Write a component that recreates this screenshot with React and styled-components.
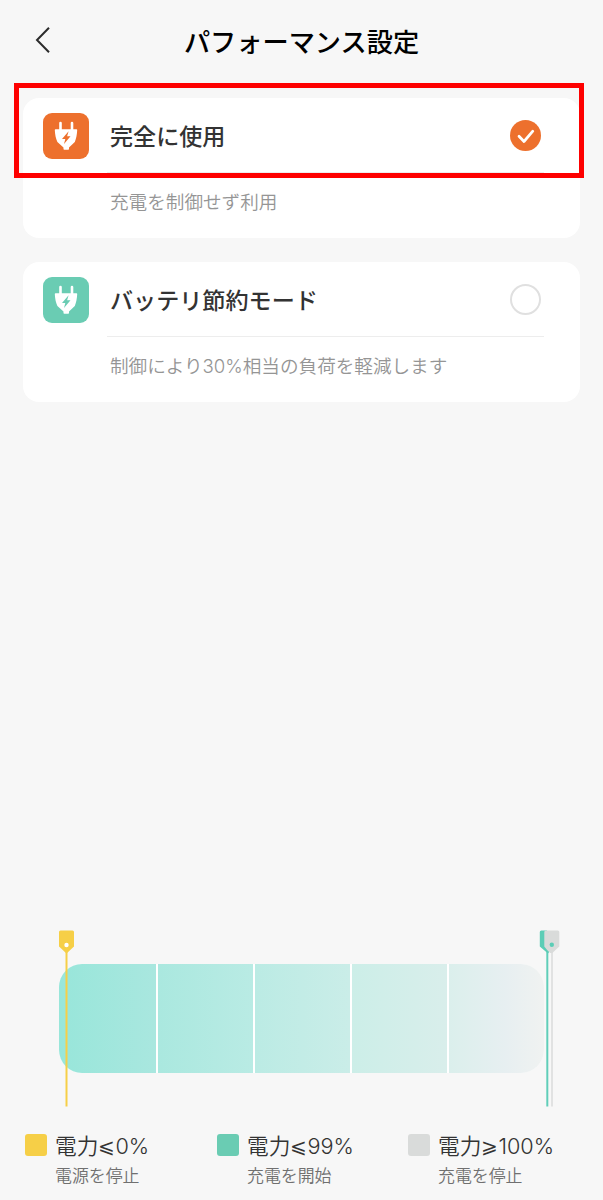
import React from 'react'
import styled, { createGlobalStyle } from 'styled-components'

const ORANGE = '#ed702d'
const GREEN = '#6accb3'
const YELLOW = '#f6cf47'
const GREY = '#d9dbda'

const MODES = [
  {
    title: '完全に使用',
    text: '充電を制御せず利用',
    color: ORANGE,
    selected: true,
  },
  {
    title: 'バッテリ節約モード',
    text: '制御により30%相当の負荷を軽減します',
    color: GREEN,
    selected: false,
  },
]

const LEGEND = [
  { color: YELLOW, sign: '⩽', value: '0%', text: '電源を停止' },
  { color: GREEN, sign: '⩽', value: '99%', text: '充電を開始' },
  { color: GREY, sign: '⩾', value: '100%', text: '充電を停止' },
]

const SEGMENTS = [
  ['#98e6da', '#a9e7df'],
  ['#aae8df', '#b9ebe4'],
  ['#bbebe4', '#caede8'],
  ['#cceee8', '#d9eeeb'],
  ['#dbefec', '#e7eff1 60%, #f0f2f1'],
]

function PlugIcon({ color }) {
  return (
    <svg width="46" height="46" viewBox="0 0 46 46">
      <path d="M17.500 10v8M29 10v8" stroke="#fff" strokeWidth="2.600" strokeLinecap="round" />
      <path
        d="M12.500 16.200H33.500Q34.200 16.200 34.200 17C34 21.500 33.200 25.500 31.800 29L26 34.500V36Q26 36.800 25.200 36.800H21.300Q20.500 36.800 20.500 36V34.500L14.400 29C12.800 25.500 12 21.500 11.800 17Q11.800 16.200 12.500 16.200Z"
        fill="#fff"
      />
      <path d="M25.600 18.300L19 26H22.300L21 30.900L27.500 23.200H24.100Z" fill={color} />
    </svg>
  )
}

export default class App extends React.Component {
  render() {
    return (
      <PageWrapper>
        <GlobalStyles />
        <Header>
          <BackButton aria-label="戻る">
            <svg width="18" height="28" viewBox="0 0 18 28">
              <path
                d="M15 1.700L3 14l12 12.300"
                fill="none"
                stroke="#2c2c2c"
                strokeWidth="2"
              />
            </svg>
          </BackButton>
          <h1>パフォーマンス設定</h1>
        </Header>

        <CardList>
          {MODES.map((mode) => (
            <Card key={mode.title}>
              <CardTop>
                <IconTile color={mode.color}>
                  <PlugIcon color={mode.color} />
                </IconTile>
                <CardTitle>{mode.title}</CardTitle>
                <Radio $selected={mode.selected}>
                  {mode.selected && (
                    <svg width="31" height="31" viewBox="0 0 31 31">
                      <path
                        d="M9 16.200l5 5.300 8.800-10.300"
                        fill="none"
                        stroke="#fff"
                        strokeWidth="2.700"
                        strokeLinecap="round"
                        strokeLinejoin="round"
                      />
                    </svg>
                  )}
                </Radio>
              </CardTop>
              <CardText>{mode.text}</CardText>
              {mode.selected && <Highlight />}
            </Card>
          ))}
        </CardList>

        <Chart>
          <Battery>
            {SEGMENTS.map(([from, to]) => (
              <Segment key={from} $from={from} $to={to} />
            ))}
          </Battery>
          <StartMarker>
            <svg width="16" height="177" viewBox="0 0 16 177">
              <path d="M8.500 20v156.500" stroke={YELLOW} strokeWidth="2" />
              <path d="M1 2q0-1.500 1.500-1.500h12q1.500 0 1.500 1.500v14.500L8.500 23.500 1 16.500z" fill={YELLOW} />
              <circle cx="8.500" cy="15" r="2.200" fill="#fff" />
            </svg>
          </StartMarker>
          <EndMarker>
            <svg width="22" height="177" viewBox="0 0 22 177">
              <path d="M13 20v156.500" stroke="#e1e2e2" strokeWidth="2" />
              <path d="M8.300 20v156.500" stroke="#60ceb9" strokeWidth="2" />
              <path d="M.8 2q0-1.500 1.500-1.500H8v18l2.500 3-1.500 2L.8 16.500z" fill="#5ccdb6" />
              <path d="M5.300 2q0-1.500 1.500-1.500h12q1.500 0 1.500 1.500v14.500l-7 6.500h-2.200q-3-2.700-5.800-6.500z" fill={GREY} />
              <circle cx="12.800" cy="14.800" r="2.200" fill="#5ccdb6" />
            </svg>
          </EndMarker>
        </Chart>

        <Legend>
          {LEGEND.map((item) => (
            <LegendItem key={item.value}>
              <Swatch color={item.color} />
              <div>
                <LegendTitle>
                  電力<Sign>{item.sign}</Sign>
                  {item.value}
                </LegendTitle>
                <LegendText>{item.text}</LegendText>
              </div>
            </LegendItem>
          ))}
        </Legend>
      </PageWrapper>
    )
  }
}

const GlobalStyles = createGlobalStyle`
  * {
    box-sizing: border-box;
  }

  body {
    margin: 0;
    background: #f7f7f7;
    font-family: Inter, 'Noto Sans CJK JP', sans-serif;
  }

  svg {
    display: block;
  }
`

const PageWrapper = styled.div`
  display: flex;
  flex-direction: column;
  height: 1200px;
  overflow: hidden;
`

// Header
//
const Header = styled.header`
  display: grid;
  grid-template-columns: 60px 1fr 60px;
  align-items: center;
  height: 98px;
  padding-bottom: 16px;

  h1 {
    margin: 0;
    padding-top: 3px;
    text-align: center;
    font-size: 26.2px;
    font-weight: 500;
    line-height: 40px;
    white-space: nowrap;
    color: #000;
  }
`

const BackButton = styled.button`
  padding: 0 0 2px 34px;
  border: none;
  background: transparent;
`

// Cards
//
const CardList = styled.main`
  display: flex;
  flex-direction: column;
  gap: 24px;
  padding: 0 23px;
`

const Card = styled.section`
  position: relative;
  height: 140px;
  padding: 0 36px 0 20px;
  border-radius: 16px;
  background: #fff;
`

const CardTop = styled.div`
  display: flex;
  align-items: center;
  height: 75px;
`

const IconTile = styled.div`
  width: 46px;
  height: 46px;
  border-radius: 9px;
  background: ${({ color }) => color};
`

const CardTitle = styled.h2`
  flex: 1;
  margin: 0 0 0 21px;
  padding-top: 2px;
  font-size: 23.1px;
  font-weight: 500;
  line-height: 34px;
  color: #333;
`

const Radio = styled.div`
  width: 31px;
  height: 31px;
  margin-right: 3px;
  border-radius: 50%;
  ${({ $selected }) =>
    $selected ? `background: ${ORANGE};` : 'border: 2px solid #e0e0e0;'}
`

const CardText = styled.p`
  margin: -1px 0 0 64px;
  padding: 15px 0 0 3px;
  border-top: 1px solid #ededed;
  font-size: 18.6px;
  font-weight: 350;
  line-height: 28px;
  color: #959595;
`

const Highlight = styled.div`
  position: absolute;
  top: -15px;
  left: -9px;
  width: 570px;
  height: 95px;
  border: 5px solid #fe0000;
`

// Battery chart
//
const Chart = styled.div`
  position: relative;
  width: 486px;
  margin: auto 0 0 58px;
`

const Battery = styled.div`
  display: grid;
  grid-template-columns: 96.500px repeat(4, 1fr);
  gap: 2px;
  height: 109px;
  margin-left: 1px;
  border-radius: 23px;
  overflow: hidden;
  background: #fff;
`

const Segment = styled.div`
  background: linear-gradient(
    to right,
    ${({ $from }) => $from},
    ${({ $to }) => $to}
  );
`

const StartMarker = styled.div`
  position: absolute;
  top: -34px;
  left: 0;
`

const EndMarker = styled.div`
  position: absolute;
  top: -34px;
  left: 481px;
`

// Legend
//
const Legend = styled.footer`
  display: grid;
  grid-template-columns: 192px 191px 1fr;
  height: 127px;
  padding: 57px 0 0 25px;
`

const LegendItem = styled.div`
  display: flex;
  gap: 8px;
`

const Swatch = styled.div`
  width: 22px;
  height: 22px;
  margin-top: 4px;
  border-radius: 3px;
  background: ${({ color }) => color};
`

const LegendTitle = styled.div`
  display: flex;
  font-size: 21.7px;
  font-weight: 350;
  line-height: 32px;
  white-space: nowrap;
  color: #333;
`

const Sign = styled.span`
  width: 17px;
  text-align: center;
  font-family: 'DejaVu Sans', sans-serif;
  font-weight: 300;
  font-size: 20px;
`

const LegendText = styled.div`
  padding-top: 1px;
  font-size: 16.9px;
  font-weight: 350;
  line-height: 26px;
  color: #707070;
`
